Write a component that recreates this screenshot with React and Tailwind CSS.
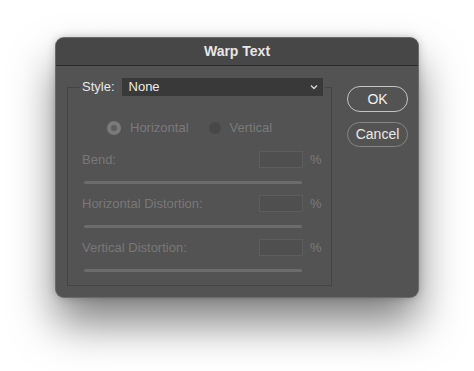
import React from "react";

const font = { fontFamily: '"Liberation Sans", "Helvetica Neue", Arial, sans-serif' };

function Row({ label }) {
  return (
    <div className="flex flex-col">
      <div className="flex items-center h-[17px]">
        <span className="text-[13px] text-[#787878] flex-1 leading-none">{label}</span>
        <div className="w-[44px] h-[17px] bg-[#4f4f4f] border border-[#5d5d5d]" />
        <span className="text-[13px] text-[#7a7a7a] w-[20px] pl-[7px] leading-none">%</span>
      </div>
      <div className="mt-[13px] ml-[2px] mr-[21px] h-[3px] rounded-full bg-[#6c6c6c]" />
    </div>
  );
}

export default function App() {
  return (
    <div className="w-[474px] h-[371px] bg-white pt-[38px] pl-[56px]" style={font}>
      <div className="w-[362px] h-[259px] rounded-[8px] bg-[#535353] shadow-[0_26px_44px_rgba(0,0,0,0.5),0_0_10px_rgba(0,0,0,0.25)] flex flex-col overflow-hidden ring-1 ring-[#6a6a6a]">
        <div className="h-[28px] bg-[#474747] border-b border-[#2b2b2b] flex items-center justify-center">
          <span className="text-[14px] font-bold text-[#e6e6e6]">Warp Text</span>
        </div>
        <div className="flex pt-[12px] pl-[11px]">
          <fieldset className="w-[265px] min-w-0 shrink-0 h-[208px] border border-[#444444] pl-[14px] pr-[8px] flex flex-col">
            <legend className="ml-[-2px] px-[2px] w-[245px] flex items-center h-[18px]">
              <span className="text-[13px] text-[#e8e8e8] mr-[7px] shrink-0">Style:</span>
              <div className="flex-1 h-[18px] bg-[#393939] flex items-center justify-between pl-[7px] pr-[5px]">
                <span className="text-[13px] text-[#ececec]">None</span>
                <svg width="8" height="6" viewBox="0 0 8 6" fill="none">
                  <path d="M1 1.5 L4 4.5 L7 1.5" stroke="#d8d8d8" strokeWidth="1.3" />
                </svg>
              </div>
            </legend>
            <div className="flex items-center mt-[25px] ml-[25px] h-[14px]">
              <div className="w-[14px] h-[14px] rounded-full bg-[#7a7a7a] flex items-center justify-center">
                <div className="w-[6px] h-[6px] rounded-full bg-[#5e5e5e]" />
              </div>
              <span className="ml-[9px] text-[13px] text-[#7a7a7a]">Horizontal</span>
              <div className="ml-[20px] w-[12px] h-[12px] rounded-full bg-[#484848]" />
              <span className="ml-[9px] text-[13px] text-[#7a7a7a]">Vertical</span>
            </div>
            <div className="flex flex-col gap-[11px] mt-[16px]">
              <Row label="Bend:" />
              <Row label="Horizontal Distortion:" />
              <Row label="Vertical Distortion:" />
            </div>
          </fieldset>
          <div className="flex flex-col ml-[15px] mt-[8px] gap-[10px]">
            <div className="w-[61px] h-[26px] rounded-full border-[1.5px] border-[#c4c4c4] flex items-center justify-center text-[14px] text-[#f0f0f0]">OK</div>
            <div className="w-[61px] h-[25px] rounded-full border border-[#858585] flex items-center justify-center text-[14px] text-[#e8e8e8]">Cancel</div>
          </div>
        </div>
      </div>
    </div>
  );
}
